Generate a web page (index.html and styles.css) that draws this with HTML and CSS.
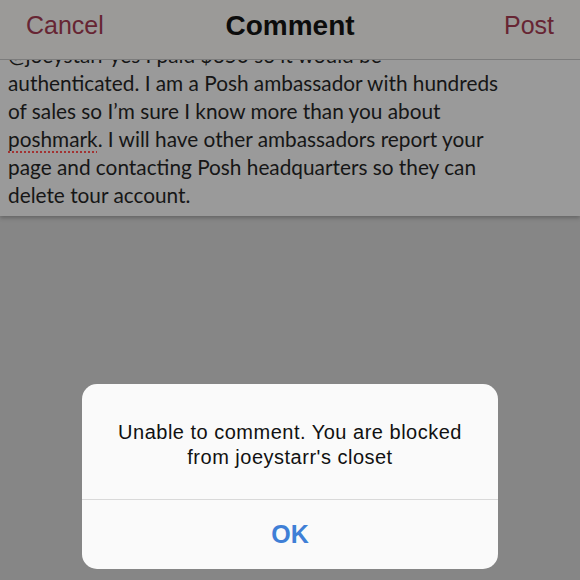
FILE: index.html
```html
<!DOCTYPE html>
<html>
<head>
<meta charset="utf-8">
<link rel="stylesheet" href="styles.css">
</head>
<body>
<div class="screen">
  <header class="nav">
    <span class="nav-btn">Cancel</span>
    <span class="nav-title">Comment</span>
    <span class="nav-btn nav-right">Post</span>
  </header>
  <section class="comment">
    <p class="comment-text">@joeystarr yes I paid $650 so it would be<br>authenticated. I am a Posh ambassador with hundreds<br>of sales so I’m sure I know more than you about<br><span class="misspelled">poshmark</span>. I will have other ambassadors report your<br>page and contacting Posh headquarters so they can<br>delete tour account.</p>
  </section>
  <div class="backdrop">
    <div class="alert">
      <div class="alert-msg">Unable to comment. You are blocked<br>from joeystarr's closet</div>
      <div class="alert-btn">OK</div>
    </div>
  </div>
</div>
</body>
</html>
```
FILE: styles.css
```css
* { box-sizing: border-box; }
html, body { margin: 0; padding: 0; }
body {
  width: 580px;
  height: 580px;
  overflow: hidden;
  background: #868686;
}
.screen {
  display: flex;
  flex-direction: column;
  height: 580px;
}
.nav {
  position: relative;
  z-index: 2;
  height: 60px;
  flex: none;
  background: #9b9a98;
  border-bottom: 1px solid #7c7c7c;
  display: grid;
  grid-template-columns: 1fr auto 1fr;
  align-items: center;
  padding: 0 26px 8px 26px;
}
.nav-btn {
  font-family: "Liberation Sans", Arial, sans-serif;
  font-size: 25px;
  color: #672533;
}
.nav-right { justify-self: end; }
.nav-title {
  font-family: "Liberation Sans", Arial, sans-serif;
  font-weight: bold;
  font-size: 28px;
  color: #0c0c0c;
}
.comment {
  position: relative;
  z-index: 1;
  flex: none;
  margin-top: -19px;
  background: #9a9a9a;
  padding: 0 0 7px 8px;
  box-shadow: 0 2px 4px rgba(0,0,0,0.25);
}
.comment-text {
  margin: 0;
  font-family: Lato, sans-serif;
  font-size: 20.8px;
  line-height: 28px;
  color: #161616;
  white-space: nowrap;
}
.misspelled {
  text-decoration: underline dotted #a23232;
  text-decoration-thickness: 2px;
  text-underline-offset: 4px;
}
.backdrop {
  flex: 1;
  display: flex;
  justify-content: center;
  align-items: flex-end;
  padding-bottom: 11px;
}
.alert {
  width: 416px;
  background: #fafafa;
  border-radius: 15px;
  overflow: hidden;
  font-family: "Liberation Sans", Arial, sans-serif;
}
.alert-msg {
  height: 116px;
  padding-top: 36px;
  text-align: center;
  font-size: 20px;
  line-height: 25px;
  letter-spacing: 0.5px;
  color: #111;
  border-bottom: 1px solid #d9d9d9;
}
.alert-btn {
  height: 69px;
  display: flex;
  align-items: center;
  justify-content: center;
  font-size: 25px;
  font-weight: bold;
  color: #3f7fd6;
}
```
